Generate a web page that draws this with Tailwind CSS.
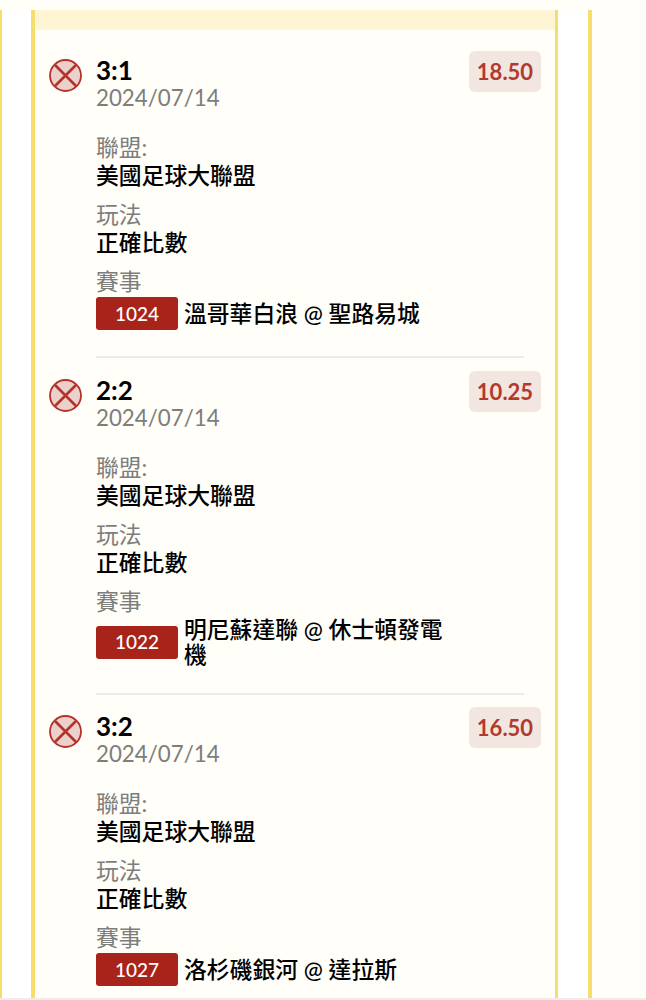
<!DOCTYPE html>
<html lang="zh-Hant">
<head>
    <meta charset="UTF-8">
    <meta name="viewport" content="width=device-width, initial-scale=1.0">
    <title>賽事紀錄</title>
    <script src="https://cdn.jsdelivr.net/npm/@tailwindcss/browser@4"></script>
</head>
<body class="bg-[#fffef8] font-['Lato','Noto_Sans_CJK_TC',sans-serif]">

<div class="w-[646px] h-[1000px] overflow-hidden relative pt-[10px]">
    <div class="flex h-[990px] bg-white">
        <div class="w-[2px] shrink-0 bg-[#f5dd6e]"></div>

        <!-- Main card -->
        <div class="ml-[29px] w-[527px] shrink-0 border-l-4 border-r-[3px] border-[#f5dd6e] bg-[#fffef8] overflow-hidden">
            <div class="h-[20px] bg-[#fdf5d3]"></div>

            <!-- Item 1 -->
            <div class="px-[14px] pt-[26px]">
                <div class="flex items-start">
                    <svg class="w-[33px] h-[33px] mt-[3px] shrink-0" viewBox="0 0 33 33" fill="none">
                        <circle cx="16.5" cy="16.5" r="15.5" fill="#ecd0cb" stroke="#b5322b" stroke-width="1.8"/>
                        <path d="M6.5 6.5L26.5 26.5M26.5 6.5L6.5 26.5" stroke="#b5322b" stroke-width="2.6" stroke-linecap="round"/>
                    </svg>
                    <div class="ml-[14px]">
                        <div class="text-[26px] leading-[28px] font-bold text-black">3:1</div>
                        <div class="text-[22.3px] leading-[28px] text-[#7d7d7d]">2024/07/14</div>
                    </div>
                    <div class="ml-auto -mt-[5px] w-[72px] h-[41px] rounded-md bg-[#f3e6e0] flex items-center justify-center text-[22px] font-bold text-[#b03a2e]">18.50</div>
                </div>
                <div class="ml-[47px] mt-[21px] text-[22.8px] leading-[28px]">
                    <div class="text-[#7d7d7d]">聯盟:</div>
                    <div class="font-medium text-black">美國足球大聯盟</div>
                    <div class="text-[#7d7d7d] mt-[11px]">玩法</div>
                    <div class="font-medium text-black">正確比數</div>
                    <div class="text-[#7d7d7d] mt-[11px]">賽事</div>
                    <div class="flex items-center gap-[6px] mt-[2px]">
                        <div class="w-[82px] h-[33px] shrink-0 rounded-[3px] bg-[#a8241a] text-white text-[19px] font-medium flex items-center justify-center">1024</div>
                        <div class="w-[262px] font-medium text-black leading-[25px]">溫哥華白浪 @ 聖路易城</div>
                    </div>
                </div>
                <div class="ml-[47px] mr-[17px] mt-[26px] border-t-2 border-[#ecebe6]"></div>
            </div>

            <!-- Item 2 -->
            <div class="px-[14px] pt-[18px]">
                <div class="flex items-start">
                    <svg class="w-[33px] h-[33px] mt-[3px] shrink-0" viewBox="0 0 33 33" fill="none">
                        <circle cx="16.5" cy="16.5" r="15.5" fill="#ecd0cb" stroke="#b5322b" stroke-width="1.8"/>
                        <path d="M6.5 6.5L26.5 26.5M26.5 6.5L6.5 26.5" stroke="#b5322b" stroke-width="2.6" stroke-linecap="round"/>
                    </svg>
                    <div class="ml-[14px]">
                        <div class="text-[26px] leading-[28px] font-bold text-black">2:2</div>
                        <div class="text-[22.3px] leading-[28px] text-[#7d7d7d]">2024/07/14</div>
                    </div>
                    <div class="ml-auto -mt-[5px] w-[72px] h-[41px] rounded-md bg-[#f3e6e0] flex items-center justify-center text-[22px] font-bold text-[#b03a2e]">10.25</div>
                </div>
                <div class="ml-[47px] mt-[21px] text-[22.8px] leading-[28px]">
                    <div class="text-[#7d7d7d]">聯盟:</div>
                    <div class="font-medium text-black">美國足球大聯盟</div>
                    <div class="text-[#7d7d7d] mt-[11px]">玩法</div>
                    <div class="font-medium text-black">正確比數</div>
                    <div class="text-[#7d7d7d] mt-[11px]">賽事</div>
                    <div class="flex items-center gap-[6px] mt-[2px]">
                        <div class="w-[82px] h-[33px] shrink-0 rounded-[3px] bg-[#a8241a] text-white text-[19px] font-medium flex items-center justify-center">1022</div>
                        <div class="w-[262px] font-medium text-black leading-[25px]">明尼蘇達聯 @ 休士頓發電機</div>
                    </div>
                </div>
                <div class="ml-[47px] mr-[17px] mt-[26px] border-t-2 border-[#ecebe6]"></div>
            </div>

            <!-- Item 3 -->
            <div class="px-[14px] pt-[17px]">
                <div class="flex items-start">
                    <svg class="w-[33px] h-[33px] mt-[3px] shrink-0" viewBox="0 0 33 33" fill="none">
                        <circle cx="16.5" cy="16.5" r="15.5" fill="#ecd0cb" stroke="#b5322b" stroke-width="1.8"/>
                        <path d="M6.5 6.5L26.5 26.5M26.5 6.5L6.5 26.5" stroke="#b5322b" stroke-width="2.6" stroke-linecap="round"/>
                    </svg>
                    <div class="ml-[14px]">
                        <div class="text-[26px] leading-[28px] font-bold text-black">3:2</div>
                        <div class="text-[22.3px] leading-[28px] text-[#7d7d7d]">2024/07/14</div>
                    </div>
                    <div class="ml-auto -mt-[5px] w-[72px] h-[41px] rounded-md bg-[#f3e6e0] flex items-center justify-center text-[22px] font-bold text-[#b03a2e]">16.50</div>
                </div>
                <div class="ml-[47px] mt-[21px] text-[22.8px] leading-[28px]">
                    <div class="text-[#7d7d7d]">聯盟:</div>
                    <div class="font-medium text-black">美國足球大聯盟</div>
                    <div class="text-[#7d7d7d] mt-[11px]">玩法</div>
                    <div class="font-medium text-black">正確比數</div>
                    <div class="text-[#7d7d7d] mt-[11px]">賽事</div>
                    <div class="flex items-center gap-[6px] mt-[2px]">
                        <div class="w-[82px] h-[33px] shrink-0 rounded-[3px] bg-[#a8241a] text-white text-[19px] font-medium flex items-center justify-center">1027</div>
                        <div class="w-[262px] font-medium text-black leading-[25px]">洛杉磯銀河 @ 達拉斯</div>
                    </div>
                </div>
            </div>
        </div>

        <!-- Next card, cut off by the window -->
        <div class="ml-[30px] flex-1 border-l-4 border-[#f5dd6e] bg-[#fffef8]"></div>
    </div>
    <div class="absolute bottom-0 inset-x-0 h-[2px] bg-[#ecece8]"></div>
</div>

</body>
</html>
